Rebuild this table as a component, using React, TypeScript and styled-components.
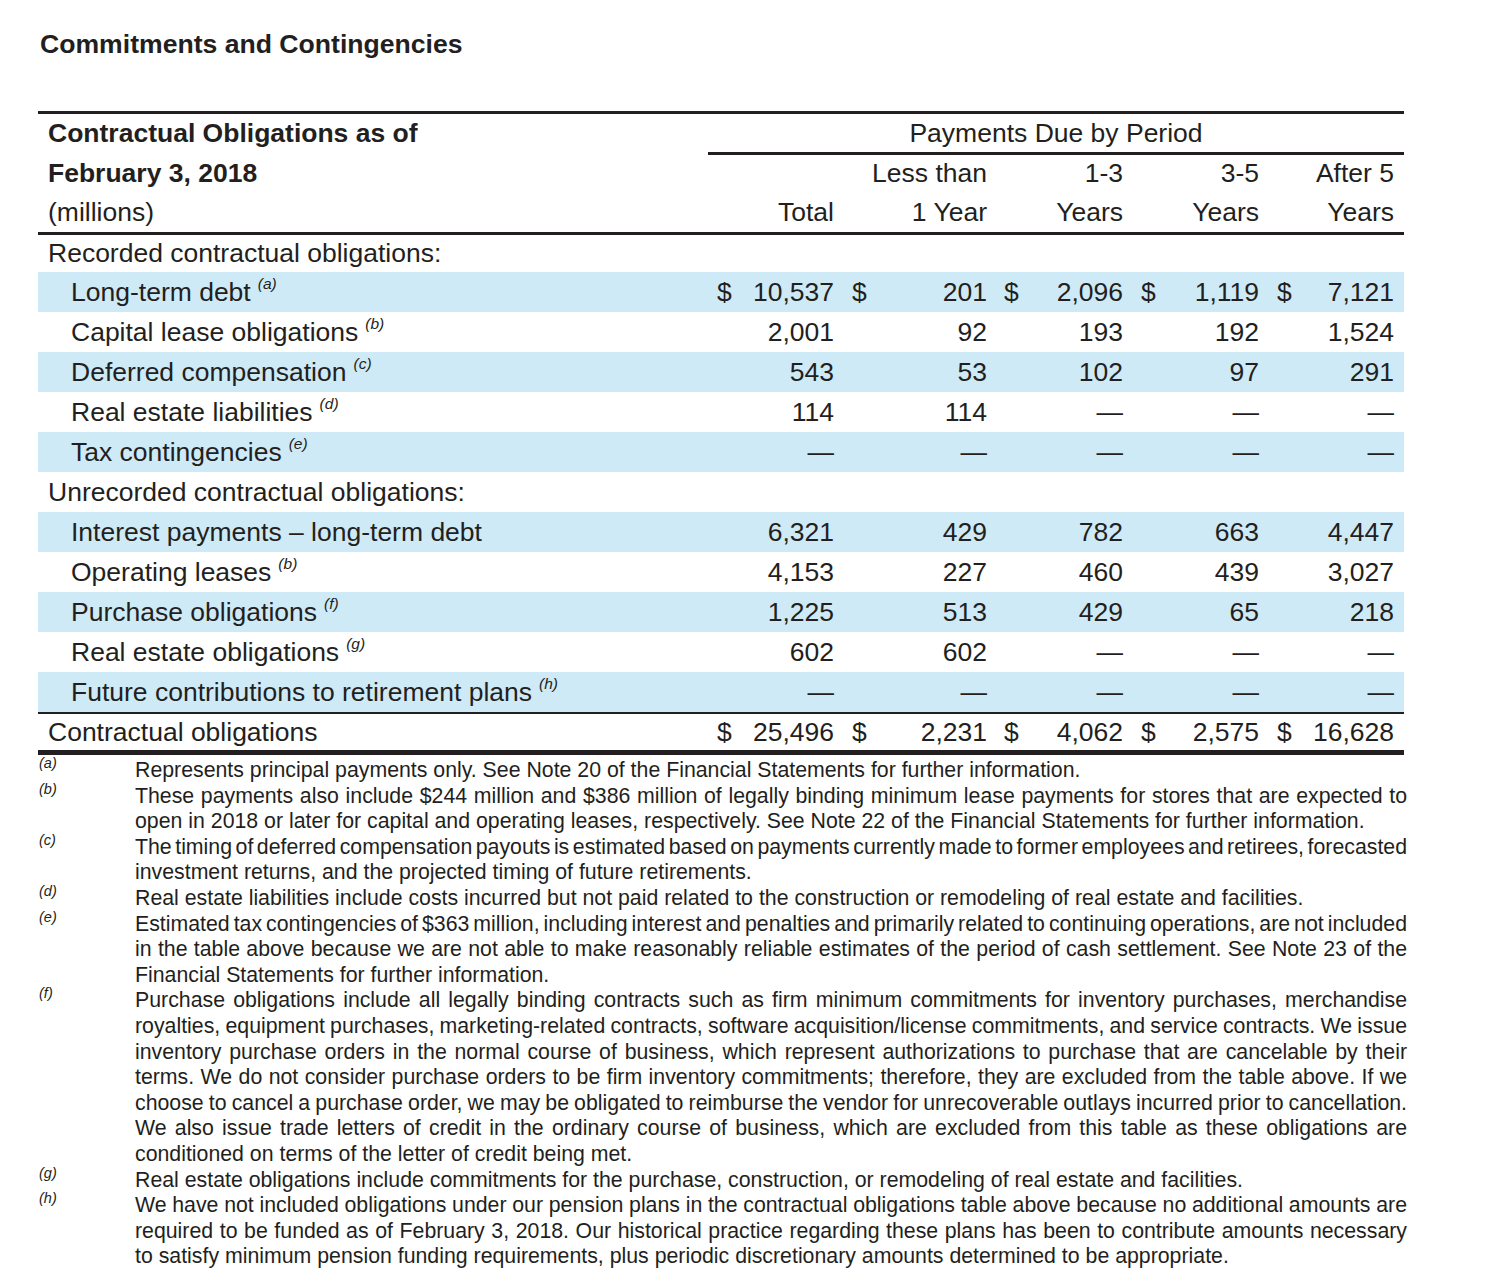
import React from "react";
import styled, { createGlobalStyle } from "styled-components";

const INK = "#231f20";
const SHADE = "#cfeaf7";

const GlobalStyle = createGlobalStyle`
  html, body { margin: 0; padding: 0; background: #ffffff; }
  body {
    font-family: "Liberation Sans", Arial, Helvetica, sans-serif;
    color: ${INK};
  }
`;

const Page = styled.div`
  width: 1490px;
  padding: 29px 0 30px 38px;
  box-sizing: border-box;
`;

const Title = styled.h1`
  margin: 0 0 0 2px;
  font-size: 26.6px;
  line-height: 30px;
  font-weight: 700;
  color: ${INK};
`;

const Table = styled.div`
  margin-top: 52px;
  width: 1366px;
  border-top: 3px solid ${INK};
  font-size: 26.5px;
`;

const COLS = "670px 134px 153px 136px 136px 137px";

const Row = styled.div<{ $h: number; $lh?: number; $shade?: boolean; $top?: number; $bottom?: number }>`
  display: grid;
  grid-template-columns: ${COLS};
  height: ${(p) => p.$h}px;
  line-height: ${(p) => p.$lh ?? p.$h}px;
  background: ${(p) => (p.$shade ? SHADE : "transparent")};
  border-top: ${(p) => (p.$top ? `${p.$top}px solid ${INK}` : "none")};
  border-bottom: ${(p) => (p.$bottom ? `${p.$bottom}px solid ${INK}` : "none")};
  white-space: nowrap;
`;

const Label = styled.div<{ $indent?: boolean; $bold?: boolean }>`
  padding-left: ${(p) => (p.$indent ? 33 : 10)}px;
  font-weight: ${(p) => (p.$bold ? 700 : 400)};
`;

const PeriodCell = styled.div`
  grid-column: 2 / span 5;
  text-align: center;
  line-height: 38px;
  height: 38px;
  border-bottom: 3px solid ${INK};
`;

const HeadCell = styled.div<{ $pr: number }>`
  text-align: right;
  padding-right: ${(p) => p.$pr}px;
`;

const NumCell = styled.div<{ $pl: number; $pr: number }>`
  display: flex;
  justify-content: space-between;
  padding: 0 ${(p) => p.$pr}px 0 ${(p) => p.$pl}px;
`;

const Sup = styled.span`
  font-style: italic;
  font-size: 15.5px;
  line-height: 0;
  vertical-align: 12px;
  margin-left: 7px;
`;

const Notes = styled.div`
  margin-top: 3px;
  width: 1369px;
  display: grid;
  grid-template-columns: 97px 1272px;
  font-size: 21.3px;
  line-height: 25.6px;
`;

const NoteMark = styled.div`
  font-style: italic;
  font-size: 14.5px;
  line-height: 16px;
  margin-top: -3px;
  padding-left: 1px;
`;

const NoteBody = styled.div``;

const NoteLine = styled.span<{ $full?: boolean }>`
  display: block;
  text-align: ${(p) => (p.$full ? "justify" : "left")};
  text-align-last: ${(p) => (p.$full ? "justify" : "left")};
  word-spacing: ${(p) => (p.$full ? "-4px" : "0")};
`;

const PADS: [number, number][] = [
  [9, 8],
  [10, 8],
  [9, 8],
  [10, 8],
  [10, 10],
];

type Item = {
  kind: "section" | "item";
  label: string;
  note?: string;
  vals?: string[];
  dollar?: boolean;
  shade?: boolean;
};

const D = "\u2014";

const BODY: Item[] = [
  { kind: "section", label: "Recorded contractual obligations:" },
  { kind: "item", label: "Long-term debt", note: "a", vals: ["10,537", "201", "2,096", "1,119", "7,121"], dollar: true, shade: true },
  { kind: "item", label: "Capital lease obligations", note: "b", vals: ["2,001", "92", "193", "192", "1,524"] },
  { kind: "item", label: "Deferred compensation", note: "c", vals: ["543", "53", "102", "97", "291"], shade: true },
  { kind: "item", label: "Real estate liabilities", note: "d", vals: ["114", "114", D, D, D] },
  { kind: "item", label: "Tax contingencies", note: "e", vals: [D, D, D, D, D], shade: true },
  { kind: "section", label: "Unrecorded contractual obligations:" },
  { kind: "item", label: "Interest payments \u2013 long-term debt", vals: ["6,321", "429", "782", "663", "4,447"], shade: true },
  { kind: "item", label: "Operating leases", note: "b", vals: ["4,153", "227", "460", "439", "3,027"] },
  { kind: "item", label: "Purchase obligations", note: "f", vals: ["1,225", "513", "429", "65", "218"], shade: true },
  { kind: "item", label: "Real estate obligations", note: "g", vals: ["602", "602", D, D, D] },
  { kind: "item", label: "Future contributions to retirement plans", note: "h", vals: [D, D, D, D, D], shade: true },
];

const TOTAL = ["25,496", "2,231", "4,062", "2,575", "16,628"];

const NOTES: { mark: string; lines: string[] }[] = [
  { mark: "a", lines: ["Represents principal payments only. See Note 20 of the Financial Statements for further information."] },
  {
    mark: "b",
    lines: [
      "These payments also include $244 million and $386 million of legally binding minimum lease payments for stores that are expected to",
      "open in 2018 or later for capital and operating leases, respectively. See Note 22 of the Financial Statements for further information.",
    ],
  },
  {
    mark: "c",
    lines: [
      "The timing of deferred compensation payouts is estimated based on payments currently made to former employees and retirees, forecasted",
      "investment returns, and the projected timing of future retirements.",
    ],
  },
  { mark: "d", lines: ["Real estate liabilities include costs incurred but not paid related to the construction or remodeling of real estate and facilities."] },
  {
    mark: "e",
    lines: [
      "Estimated tax contingencies of $363 million, including interest and penalties and primarily related to continuing operations, are not included",
      "in the table above because we are not able to make reasonably reliable estimates of the period of cash settlement. See Note 23 of the",
      "Financial Statements for further information.",
    ],
  },
  {
    mark: "f",
    lines: [
      "Purchase obligations include all legally binding contracts such as firm minimum commitments for inventory purchases, merchandise",
      "royalties, equipment purchases, marketing-related contracts, software acquisition/license commitments, and service contracts. We issue",
      "inventory purchase orders in the normal course of business, which represent authorizations to purchase that are cancelable by their",
      "terms. We do not consider purchase orders to be firm inventory commitments; therefore, they are excluded from the table above. If we",
      "choose to cancel a purchase order, we may be obligated to reimburse the vendor for unrecoverable outlays incurred prior to cancellation.",
      "We also issue trade letters of credit in the ordinary course of business, which are excluded from this table as these obligations are",
      "conditioned on terms of the letter of credit being met.",
    ],
  },
  { mark: "g", lines: ["Real estate obligations include commitments for the purchase, construction, or remodeling of real estate and facilities."] },
  {
    mark: "h",
    lines: [
      "We have not included obligations under our pension plans in the contractual obligations table above because no additional amounts are",
      "required to be funded as of February 3, 2018. Our historical practice regarding these plans has been to contribute amounts necessary",
      "to satisfy minimum pension funding requirements, plus periodic discretionary amounts determined to be appropriate.",
    ],
  },
];

function Values({ vals, dollar }: { vals: string[]; dollar?: boolean }) {
  return (
    <>
      {vals.map((v, i) => (
        <NumCell key={i} $pl={PADS[i][0]} $pr={PADS[i][1]}>
          <span>{dollar ? "$" : ""}</span>
          <span>{v}</span>
        </NumCell>
      ))}
    </>
  );
}

export default function App() {
  return (
    <>
      <GlobalStyle />
      <Page>
        <Title>Commitments and Contingencies</Title>
        <Table>
          <Row $h={41} $lh={38}>
            <Label $bold>Contractual Obligations as of</Label>
            <PeriodCell>Payments Due by Period</PeriodCell>
          </Row>
          <Row $h={37} $lh={36}>
            <Label $bold>February 3, 2018</Label>
            <HeadCell $pr={8}></HeadCell>
            <HeadCell $pr={8}>Less than</HeadCell>
            <HeadCell $pr={8}>1-3</HeadCell>
            <HeadCell $pr={8}>3-5</HeadCell>
            <HeadCell $pr={10}>After 5</HeadCell>
          </Row>
          <Row $h={40} $bottom={3}>
            <Label>(millions)</Label>
            <HeadCell $pr={8}>Total</HeadCell>
            <HeadCell $pr={8}>1 Year</HeadCell>
            <HeadCell $pr={8}>Years</HeadCell>
            <HeadCell $pr={8}>Years</HeadCell>
            <HeadCell $pr={10}>Years</HeadCell>
          </Row>
          {BODY.map((r, i) =>
            r.kind === "section" ? (
              <Row key={i} $h={i === 0 ? 37 : 40}>
                <Label>{r.label}</Label>
              </Row>
            ) : (
              <Row key={i} $h={40} $shade={r.shade}>
                <Label $indent>
                  {r.label}
                  {r.note ? <Sup>({r.note})</Sup> : null}
                </Label>
                <Values vals={r.vals!} dollar={r.dollar} />
              </Row>
            )
          )}
          <Row $h={36} $top={2} $bottom={5}>
            <Label>Contractual obligations</Label>
            <Values vals={TOTAL} dollar />
          </Row>
        </Table>
        <Notes>
          {NOTES.map((n) => (
            <React.Fragment key={n.mark}>
              <NoteMark>({n.mark})</NoteMark>
              <NoteBody>
                {n.lines.map((l, j) => (
                  <NoteLine key={j} $full={j < n.lines.length - 1}>
                    {l}
                  </NoteLine>
                ))}
              </NoteBody>
            </React.Fragment>
          ))}
        </Notes>
      </Page>
    </>
  );
}
